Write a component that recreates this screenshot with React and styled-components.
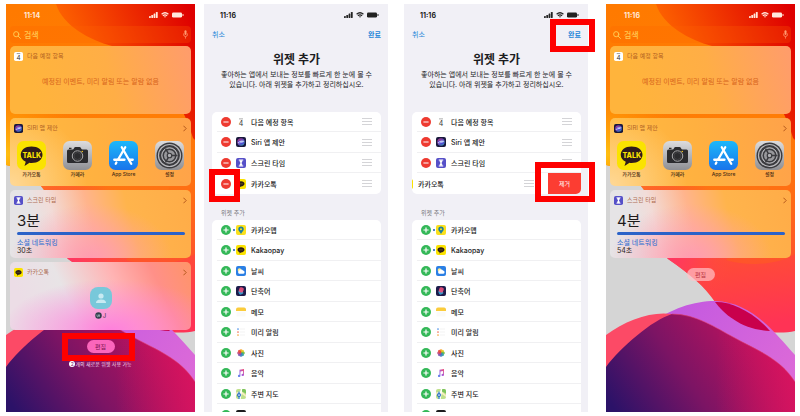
import styled, { createGlobalStyle, css } from "styled-components";

const GlobalStyle = createGlobalStyle`
  * {
    box-sizing: border-box;
  }

  body {
    margin: 0;
    background: #fff;
    font-family: Inter, "Noto Sans CJK KR", sans-serif;
    font-size: 7px;
    color: #222;
  }

  button {
    border: 0;
    padding: 0;
    background: none;
    font: inherit;
    color: inherit;
    cursor: pointer;
  }

  ul {
    list-style: none;
    margin: 0;
    padding: 0;
  }

  h1, h2, p {
    margin: 0;
    font: inherit;
  }

  svg {
    display: block;
    flex: none;
  }
`;

/* ---------- layout ---------- */

const Board = styled.main`
  display: grid;
  grid-template-columns: repeat(4, minmax(0, 1fr));
  height: 100vh;
  padding: 4px 0;
`;

const Phone = styled.section`
  position: relative;
  display: flex;
  flex-direction: column;
  min-height: 0;
  overflow: hidden;
  margin: 0 5px 0 6px;
  padding: 0 4px;
`;

const SheetPhone = styled.section`
  display: flex;
  flex-direction: column;
  min-height: 0;
  overflow: hidden;
  padding-right: 5px;
`;

const Sheet = styled.div`
  display: flex;
  flex-direction: column;
  min-height: 100%;
  margin: 0 7px 0 4px;
  padding: 0 7px 0 8px;
  background: #f1f0f6;
`;

const Highlight = styled.span`
  position: absolute;
  z-index: 2;
  border: 6px solid #fe0000;
  pointer-events: none;
  ${({ $area }) => $area}
`;

const pillArea = css`
  inset: -7px -20px -8px -25px;
`;

const doneArea = css`
  inset: -10px -14px -13px -18px;
`;

const minusArea = css`
  left: -3px;
  top: 57px;
  width: 31px;
  height: 33px;
`;

const removeArea = css`
  right: -14px;
  top: 50px;
  width: 60px;
  height: 40px;
`;

/* ---------- status bar ---------- */

const StatusRow = styled.div`
  position: relative;
  display: flex;
  align-items: center;
  justify-content: space-between;
  height: 22px;
  padding: 0 7px 0 ${({ $sheet }) => ($sheet ? "8px" : "14px")};
  color: ${({ $sheet }) => ($sheet ? "#222" : "#ffe9dc")};
  font-size: 7px;
  font-weight: 700;
  flex: none;
`;

const StatusIcons = styled.div`
  display: flex;
  align-items: center;
  gap: 3px;
  margin-right: ${({ $sheet }) => ($sheet ? "-5px" : "0")};
`;

const StatusBar = ({ time, sheet }) => (
  <StatusRow $sheet={sheet}>
    <span>{time}</span>
    <StatusIcons $sheet={sheet}>
      <svg width="9" height="6" viewBox="0 0 9 6" fill="currentColor">
        <rect x="0" y="4" width="1.8" height="2" rx=".4" />
        <rect x="2.3" y="3" width="1.8" height="3" rx=".4" />
        <rect x="4.6" y="1.6" width="1.8" height="4.4" rx=".4" />
        <rect x="6.9" y="0" width="1.8" height="6" rx=".4" />
      </svg>
      <svg width="8" height="6" viewBox="0 0 8 6" fill="none" stroke="currentColor">
        <path d="M.6 2.2Q4-.8 7.4 2.2" strokeWidth="1.3" />
        <path d="M1.9 3.7Q4 1.9 6.1 3.7" strokeWidth="1.2" />
        <path d="M3 4.6Q4 3.9 5 4.6L4 5.8Z" fill="currentColor" stroke="none" />
      </svg>
      <svg width="12" height="6" viewBox="0 0 12 6" fill="currentColor">
        <rect x="0" y=".4" width="10" height="5.2" rx="1.4" />
        <rect x="10.5" y="2" width="1" height="2" rx=".5" />
      </svg>
    </StatusIcons>
  </StatusRow>
);

/* ---------- wallpaper ---------- */

const WallpaperSvg = styled.svg`
  position: absolute;
  inset: 0;
  width: 100%;
  height: 100%;
`;

const Wallpaper = () => (
  <WallpaperSvg viewBox="0 0 189 408" preserveAspectRatio="none" aria-hidden="true">
    <defs>
      <linearGradient id="warm" gradientUnits="userSpaceOnUse" x1="60" y1="0" x2="100" y2="328">
        <stop offset="0" stopColor="#ff7a00" />
        <stop offset=".5" stopColor="#ff7e08" />
        <stop offset=".66" stopColor="#ff6a1c" />
        <stop offset=".8" stopColor="#ff4a38" />
        <stop offset="1" stopColor="#ff3355" />
      </linearGradient>
      <radialGradient id="pinkEdge" gradientUnits="userSpaceOnUse" cx="50" cy="240" r="80">
        <stop offset="0" stopColor="#ff2a7c" />
        <stop offset=".5" stopColor="#ff3a5c" stopOpacity=".7" />
        <stop offset="1" stopColor="#ff4a40" stopOpacity="0" />
      </radialGradient>
      <radialGradient id="yellowEdge" gradientUnits="userSpaceOnUse" cx="0" cy="150" r="80">
        <stop offset="0" stopColor="#ffc010" />
        <stop offset="1" stopColor="#ff8800" stopOpacity="0" />
      </radialGradient>
      <linearGradient id="hot" gradientUnits="userSpaceOnUse" x1="60" y1="60" x2="185" y2="10">
        <stop offset="0" stopColor="#ff6a00" />
        <stop offset=".45" stopColor="#f23a00" />
        <stop offset="1" stopColor="#de0000" />
      </linearGradient>
      <linearGradient id="violet" gradientUnits="userSpaceOnUse" x1="80" y1="300" x2="189" y2="370">
        <stop offset="0" stopColor="#c55ae0" />
        <stop offset="1" stopColor="#dc6ad8" />
      </linearGradient>
      <linearGradient id="deep" gradientUnits="userSpaceOnUse" x1="10" y1="408" x2="150" y2="310">
        <stop offset="0" stopColor="#2b1268" />
        <stop offset=".45" stopColor="#7c1464" />
        <stop offset="1" stopColor="#c8125c" />
      </linearGradient>
      <linearGradient id="rose" gradientUnits="userSpaceOnUse" x1="110" y1="0" x2="189" y2="0">
        <stop offset="0" stopColor="#d8105c" stopOpacity="0" />
        <stop offset="1" stopColor="#dc1460" stopOpacity=".8" />
      </linearGradient>
      <clipPath id="redShape">
        <path d="M0 161C20 165 32 178 38 186C44 215 50 243 62 255C85 271 98 282 109 298C122 315 138 325 154 327C168 329 180 329 189 327V0H0Z" />
      </clipPath>
    </defs>
    <rect width="189" height="408" fill="#d5d5d5" />
    <g clipPath="url(#redShape)">
      <rect width="189" height="330" fill="url(#warm)" />
      <rect width="189" height="330" fill="url(#yellowEdge)" />
      <rect width="189" height="330" fill="url(#pinkEdge)" />
      <path d="M189 120V250C170 262 140 262 120 256C150 225 165 180 189 120Z" fill="#ff6a10" opacity=".35" />
    </g>
    <path d="M50 0C57 22 84 36 106 42C150 58 176 96 187 134L189 136V0Z" fill="url(#hot)" />
    <path d="M40 322C66 304 88 297 109 297C146 298 168 328 189 351V384L100 350Z" fill="url(#violet)" />
    <path
      d="M109 298C122 297 146 306 164 327C136 326 118 310 109 298Z"
      fill="#c9004c"
    />
    <path d="M0 331C20 316 45 307 66 310C50 328 20 340 0 368Z" fill="#fc4a66" />
    <path d="M0 363C14 344 46 316 66 310C90 310 110 324 127 333C150 346 174 354 189 378V408H0Z" fill="url(#deep)" />
    <path d="M66 310C90 310 110 324 127 333C150 346 174 354 189 378V408H66Z" fill="url(#rose)" />
    <path d="M66 310C90 310 110 324 127 333C150 346 174 354 189 378" fill="none" stroke="#e0406c" strokeOpacity=".6" />
  </WallpaperSvg>
);

/* ---------- icons ---------- */

const Icon = ({ size = 10, children }) => (
  <svg width={size} height={size} viewBox="0 0 20 20" aria-hidden="true">
    {children}
  </svg>
);

const CalendarIcon = ({ size, dim }) => (
  <Icon size={size}>
    <rect width="20" height="20" rx="4" fill="#fff" />
    <rect x="6" y="3" width="8" height="1.6" fill={dim ? "#999" : "#777"} />
    <text x="10" y="17" textAnchor="middle" fontSize="14" fill="#333">4</text>
  </Icon>
);

const SiriIcon = ({ size }) => (
  <Icon size={size}>
    <defs>
      <linearGradient id="siri" x1="0" y1="0" x2="1" y2="1">
        <stop offset="0" stopColor="#ee3a8c" />
        <stop offset=".5" stopColor="#7a5ae8" />
        <stop offset="1" stopColor="#30c8e8" />
      </linearGradient>
    </defs>
    <rect width="20" height="20" rx="4" fill="#18183c" />
    <circle cx="10" cy="10" r="7.4" fill="url(#siri)" opacity=".75" />
    <path d="M3 12Q8 5 17 8Q13 14 3 12Z" fill="#d8e8ff" opacity=".8" />
    <path d="M4 8Q9 15 16 12" fill="none" stroke="#4a3ae8" strokeWidth="1.6" />
  </Icon>
);

const ScreenTimeIcon = ({ size }) => (
  <Icon size={size}>
    <rect width="20" height="20" rx="4" fill="#5650c8" />
    <path d="M5.5 4H14.5M5.5 16H14.5" stroke="#fff" strokeWidth="2" />
    <path d="M7 4.5H13C13 8 11.5 9 11 10C11.5 11 13 12 13 15.5H7C7 12 8.5 11 9 10C8.5 9 7 8 7 4.5Z" fill="#fff" />
  </Icon>
);

const TalkIcon = ({ size }) => (
  <Icon size={size}>
    <rect width="20" height="20" rx="4" fill="#fbe300" />
    <path d="M10 4.5C14.2 4.5 17 6.8 17 9.7S14.2 15 10 15L6.6 17L7.2 14.4C4.6 13.5 3 11.8 3 9.7C3 6.8 5.8 4.5 10 4.5Z" fill="#2c1c1a" />
    <path d="M6 9.7H14" stroke="#8a780e" strokeWidth="1.4" strokeDasharray="1.6 .6" />
  </Icon>
);

const MapPinIcon = () => (
  <Icon>
    <rect width="20" height="20" rx="4" fill="#fae01c" />
    <path d="M10 3A5.5 5.5 0 0 1 15.5 8.5C15.5 12 11.5 14 10 18C8.5 14 4.5 12 4.5 8.5A5.5 5.5 0 0 1 10 3Z" fill="#1d7fa0" />
    <circle cx="10" cy="8.5" r="2" fill="#fae01c" />
  </Icon>
);

const WeatherIcon = () => (
  <Icon>
    <rect width="20" height="20" rx="4" fill="#2b7fe4" />
    <circle cx="7" cy="8" r="3.6" fill="#ffe98a" />
    <path d="M6.5 15.5A3.3 3.3 0 0 1 6.6 9.2A4.2 4.2 0 0 1 14 8.8A3.4 3.4 0 0 1 14.5 15.5Z" fill="#fff" />
  </Icon>
);

const ShortcutsIcon = () => (
  <Icon>
    <rect width="20" height="20" rx="4" fill="#1c1b4a" />
    <rect x="5" y="8" width="9" height="9" rx="3" transform="rotate(-20 9 12)" fill="#36a8d8" opacity=".9" />
    <rect x="6" y="3" width="9" height="10" rx="3" transform="rotate(20 11 8)" fill="#f0507c" opacity=".9" />
  </Icon>
);

const NotesIcon = () => (
  <Icon>
    <rect width="20" height="20" rx="4" fill="#fdfdfb" />
    <path d="M0 8V5A4 4 0 0 1 4 1H16A4 4 0 0 1 20 4V8Z" fill="#fbcc3c" />
    <path d="M2 12H18M2 16H18" stroke="#f2f2f2" />
  </Icon>
);

const RemindersIcon = () => (
  <Icon>
    <circle cx="4" cy="4" r="1.7" fill="#4a90e8" />
    <circle cx="4" cy="10" r="1.7" fill="#f0705c" />
    <circle cx="4" cy="16" r="1.7" fill="#f8a53c" />
    <path d="M8 4H18M8 10H18M8 16H18" stroke="#e4e4e4" />
  </Icon>
);

const petals = ["#f8a020", "#e8d020", "#70b840", "#30a898", "#4078c8", "#7858b0", "#c04880", "#e84838"];

const PhotosIcon = () => (
  <Icon>
    {petals.map((fill, i) => (
      <rect
        key={fill}
        x="7.4"
        y="2.4"
        width="5.2"
        height="7.6"
        rx="2.4"
        fill={fill}
        opacity=".9"
        transform={`rotate(${i * 45} 10 10)`}
      />
    ))}
  </Icon>
);

const MusicIcon = () => (
  <Icon>
    <defs>
      <linearGradient id="note" x1="0" y1="1" x2="1" y2="0">
        <stop offset="0" stopColor="#4a8cf0" />
        <stop offset=".5" stopColor="#a85ad8" />
        <stop offset="1" stopColor="#f8506c" />
      </linearGradient>
    </defs>
    <path
      d="M7 3.5L16 2V14A2.5 2.2 0 1 1 14.2 11.9V6L8.8 7V15.8A2.5 2.2 0 1 1 7 13.6Z"
      fill="url(#note)"
    />
  </Icon>
);

const MapsIcon = () => (
  <Icon>
    <rect width="20" height="20" rx="4" fill="#bfe08c" />
    <path d="M12 0H16A4 4 0 0 1 20 4V9L12 5Z" fill="#7cc45c" />
    <path d="M0 12L9 8L20 16V12L10 4L0 7Z" fill="#f6edc0" />
    <path d="M11 0L8 20" stroke="#fff" strokeWidth="3" />
    <path d="M6 5V20" stroke="#3a8ae0" strokeWidth="2.6" />
    <circle cx="6" cy="12" r="4" fill="#2a6cc8" />
    <path d="M6 9L8 14L6 13L4 14Z" fill="#fff" />
  </Icon>
);

const StocksIcon = () => (
  <Icon>
    <rect width="20" height="20" rx="4" fill="#1c1c1e" />
    <path d="M3 13L8 9L12 12L17 6" fill="none" stroke="#fff" />
  </Icon>
);

const AppTile = ({ children }) => (
  <svg width="29" height="29" viewBox="0 0 58 58" aria-hidden="true">
    {children}
  </svg>
);

const TalkTile = () => (
  <AppTile>
    <rect width="58" height="58" rx="13" fill="#fae300" />
    <path d="M29 11C42 11 51 18 51 27.5S42 44 29 44Q27 44 25 43.6L15 50L17.5 41.5C11 38.5 7.5 33.5 7.5 27.5C7.5 18 16 11 29 11Z" fill="#2e1c1c" />
    <text x="29.5" y="33" textAnchor="middle" fontSize="14" fontWeight="800" fill="#fae300">TALK</text>
  </AppTile>
);

const CameraTile = () => (
  <AppTile>
    <defs>
      <linearGradient id="silver" x1="0" y1="0" x2="0" y2="1">
        <stop offset="0" stopColor="#dcdcde" />
        <stop offset="1" stopColor="#8e8f94" />
      </linearGradient>
    </defs>
    <rect width="58" height="58" rx="13" fill="url(#silver)" />
    <path d="M12 13.5H17V16H12ZM8 20Q8 17 11 17H19Q21 17 22 14.5Q23 12 25 12H33Q35 12 36 14.5Q37 17 39 17H47Q50 17 50 20V41Q50 44 47 44H11Q8 44 8 41Z" fill="#2b2b2e" />
    <circle cx="29" cy="30" r="10.5" fill="none" stroke="#a8a8aa" strokeWidth="2" />
    <circle cx="29" cy="30" r="7" fill="none" stroke="#48484c" strokeWidth="1.5" />
    <circle cx="38.5" cy="21" r="1.6" fill="#f0c020" />
  </AppTile>
);

const StoreTile = () => (
  <AppTile>
    <defs>
      <linearGradient id="store" x1="0" y1="0" x2="0" y2="1">
        <stop offset="0" stopColor="#1cb8fa" />
        <stop offset="1" stopColor="#1a74ea" />
      </linearGradient>
    </defs>
    <rect width="58" height="58" rx="13" fill="url(#store)" />
    <g fill="none" stroke="#fff" strokeWidth="4.6" strokeLinecap="round">
      <path d="M32.5 12.5L18.5 36.5M14.8 43L13.5 45.5" />
      <path d="M25.5 12.5L44.5 45.5" />
      <path d="M10.5 37.5H31M40 37.5H47.5" />
    </g>
  </AppTile>
);

const SettingsTile = () => (
  <AppTile>
    <rect width="58" height="58" rx="13" fill="url(#silver)" />
    <circle cx="29" cy="29" r="26" fill="#3b3b3f" />
    <circle cx="29" cy="29" r="22" fill="none" stroke="#b6b6ba" strokeWidth="2.4" />
    <circle cx="29" cy="29" r="15.5" fill="#98989c" stroke="#c4c4c8" strokeWidth="2" />
    <circle cx="29" cy="29" r="12.5" fill="none" stroke="#3b3b3f" strokeWidth="3" />
    <path d="M29 29L45 29M29 29L21 15.1M29 29L21 42.9" stroke="#3b3b3f" strokeWidth="3" />
    <circle cx="29" cy="29" r="4.5" fill="#b0b0b4" stroke="#3b3b3f" strokeWidth="2.4" />
  </AppTile>
);

/* ---------- widget screen ---------- */

const SearchBar = styled.label`
  position: relative;
  display: flex;
  align-items: center;
  gap: 3px;
  height: 17px;
  margin-bottom: 3px;
  padding: 0 3px;
  border-radius: 4px;
  background: rgba(255, 100, 0, 0.25);
  color: #ffc852;
  flex: none;
`;

const SearchInput = styled.input`
  flex: 1;
  min-width: 0;
  padding: 0;
  border: 0;
  outline: 0;
  background: none;
  font: inherit;
  font-size: 8px;
  font-weight: 500;
  color: inherit;

  &::placeholder {
    color: inherit;
    opacity: 1;
  }
`;

const WidgetStack = styled.div`
  position: relative;
  display: grid;
  grid-auto-rows: 68px;
  gap: 4px;
  flex: none;
`;

const tints = {
  peach: "linear-gradient(75deg, #ffb43c 15%, #ffae46 55%, #ff9c6c)",
  amber:
    "radial-gradient(circle at 0 100%, #ffd896, transparent 40%), linear-gradient(80deg, #ffbc40, #ffb040 50%, #ffa24a)",
  mixed:
    "radial-gradient(ellipse 45% 80% at 45% 100%, #ff9cb0, rgba(255, 156, 160, 0)), linear-gradient(75deg, #e6e4e6 16%, #f2dcd8 27%, #ffb48c 46%, #ffb44c 66%, #ffac48)",
  pink:
    "radial-gradient(ellipse 60% 75% at 56% 100%, #ff80dc, rgba(255, 128, 200, 0)), linear-gradient(65deg, #ecdde6 12%, #e8e4e6 34%, #ffb4b4 60%, #ff9088 80%, #ff9468)",
};

const WidgetCard = styled.article`
  padding: 5px 4px;
  border-radius: 5px;
  background: ${({ $tint }) => tints[$tint]};
  overflow: hidden;
`;

const WidgetHead = styled.header`
  display: flex;
  align-items: center;
  gap: 4px;
  height: 10px;
  font-size: 6px;
  line-height: 10px;
  color: rgba(150, 66, 20, 0.75);

  h2 {
    flex: 1;
  }
`;

const EmptyText = styled.p`
  margin-top: 14px;
  text-align: center;
  line-height: 14px;
  color: #d8641c;
`;

const AppRow = styled.ul`
  display: flex;
  justify-content: space-between;
  margin: 8px 3px 0;
`;

const AppItem = styled.li`
  display: flex;
  flex-direction: column;
  align-items: center;
  width: 29px;
  font-size: 5px;
  line-height: 9px;
  font-weight: 500;
  color: #4a2c14;
  white-space: nowrap;
`;

const Usage = styled.div`
  margin: 6px 2px 0 3px;
  line-height: 8px;
  color: #2b2320;
`;

const UsageTotal = styled.p`
  font-size: 15px;
  line-height: 20px;
  color: #1e1a1a;
`;

const UsageBar = styled.div`
  height: 3px;
  margin: 1px 0 4px;
  border-radius: 2px;
  background: #2b62c8;
`;

const UsageLabel = styled.p`
  color: #2a6ad0;
`;

const Friend = styled.div`
  display: flex;
  flex-direction: column;
  align-items: center;
  gap: 3px;
  margin-top: 10px;
`;

const FriendName = styled.span`
  display: flex;
  align-items: center;
  gap: 1px;
  font-size: 6px;
  line-height: 7px;
  color: #3a2c44;
`;

const EditArea = styled.div`
  position: relative;
  display: flex;
  flex-direction: column;
  align-items: center;
  gap: 7px;
  margin-top: 10px;
`;

const PillWrap = styled.div`
  position: relative;
`;

const EditPill = styled.button`
  display: block;
  width: 28px;
  height: 13px;
  border-radius: 7px;
  background: ${({ $bright }) => ($bright ? "#fb66bc" : "rgba(255, 195, 200, 0.7)")};
  color: ${({ $bright }) => ($bright ? "#7c1450" : "#b83440")};
  font-size: 6px;
`;

const Hint = styled.p`
  display: flex;
  align-items: center;
  font-size: 5px;
  line-height: 8px;
  color: #f3d8ea;
  white-space: nowrap;
`;

const HintCount = styled.span`
  width: 6px;
  border-radius: 3px;
  background: #fff;
  color: #7c1464;
  line-height: 6px;
  text-align: center;
`;

const Chevron = () => (
  <svg width="4" height="7" viewBox="0 0 4 7" fill="none" stroke="#b4581c" strokeLinecap="round">
    <path d="M.7 1L3.2 3.5L.7 6" />
  </svg>
);

const Widget = ({ icon, title, tint, chevron, children }) => (
  <WidgetCard $tint={tint}>
    <WidgetHead>
      {icon}
      <h2>{title}</h2>
      {chevron && <Chevron />}
    </WidgetHead>
    {children}
  </WidgetCard>
);

const suggestedApps = [
  { name: "카카오톡", Tile: TalkTile },
  { name: "카메라", Tile: CameraTile },
  { name: "App Store", Tile: StoreTile },
  { name: "설정", Tile: SettingsTile },
];

const WidgetScreen = ({ time, total, detail, withTalk }) => (
  <Phone>
    <Wallpaper />
    <StatusBar time={time} />
    <SearchBar>
      <svg width="8" height="8" viewBox="0 0 8 8" fill="none" stroke="currentColor" strokeLinecap="round">
        <circle cx="3.2" cy="3.2" r="2.6" />
        <path d="M5.2 5.2L7.5 7.5" />
      </svg>
      <SearchInput placeholder="검색" aria-label="검색" />
      <svg width="5" height="9" viewBox="0 0 5 9" fill="none" stroke="#ff9a70">
        <rect x="1.5" y=".3" width="2" height="4.7" rx="1" fill="#ff9a70" stroke="none" />
        <path d="M.5 3.5V4.5A2 2 0 0 0 4.5 4.5V3.5M2.5 6.5V8.6" strokeWidth=".7" />
      </svg>
    </SearchBar>

    <WidgetStack>
      <Widget icon={<CalendarIcon size={9} />} title="다음 예정 항목" tint="peach">
        <EmptyText>예정된 이벤트, 미리 알림 또는 알람 없음</EmptyText>
      </Widget>
      <Widget icon={<SiriIcon size={9} />} title="SIRI 앱 제안" tint="amber" chevron>
        <AppRow>
          {suggestedApps.map(({ name, Tile }) => (
            <AppItem key={name}>
              <Tile />
              {name}
            </AppItem>
          ))}
        </AppRow>
      </Widget>
      <Widget icon={<ScreenTimeIcon size={9} />} title="스크린 타임" tint="mixed" chevron>
        <Usage>
          <UsageTotal>{total}</UsageTotal>
          <UsageBar />
          <UsageLabel>소셜 네트워킹</UsageLabel>
          <p>{detail}</p>
        </Usage>
      </Widget>
      {withTalk && (
        <Widget icon={<TalkIcon size={9} />} title="카카오톡" tint="pink" chevron>
          <Friend>
            <svg width="22" height="22" viewBox="0 0 22 22" aria-hidden="true">
              <rect width="22" height="22" rx="8" fill="#78c8da" />
              <circle cx="11" cy="9" r="2.6" fill="#c8eaf2" />
              <path d="M6 16C6 13 8.5 12.4 11 12.4S16 13 16 16Z" fill="#c8eaf2" />
            </svg>
            <FriendName>
              <svg width="7" height="7" viewBox="0 0 14 14" aria-hidden="true">
                <circle cx="7" cy="7" r="6.5" fill="#30404c" />
                <path d="M4 5V8A1.5 1.5 0 0 0 7 8V5M9 5V9.5" fill="none" stroke="#b8c8d0" strokeWidth="1.4" />
              </svg>
              J
            </FriendName>
          </Friend>
        </Widget>
      )}
    </WidgetStack>

    <EditArea>
      <PillWrap>
        <EditPill $bright={withTalk}>편집</EditPill>
        {withTalk && <Highlight $area={pillArea} />}
      </PillWrap>
      {withTalk && (
        <Hint>
          <HintCount>2</HintCount>개의 새로운 위젯 사용 가능
        </Hint>
      )}
    </EditArea>
  </Phone>
);

/* ---------- add widgets sheet ---------- */

const NavRow = styled.nav`
  display: flex;
  align-items: center;
  justify-content: space-between;
  height: 16px;
  color: #1f86d8;
  flex: none;
`;

const DoneButton = styled.button`
  position: relative;
  font-weight: 700;
`;

const SheetTitle = styled.h1`
  margin-top: 9px;
  text-align: center;
  font-size: 12px;
  font-weight: 700;
  line-height: 18px;
  color: #1c1c1e;
`;

const SheetText = styled.p`
  text-align: center;
  line-height: 10px;
  margin: 1px 0 22px;
  color: #1c1c1e;
`;

const SectionLabel = styled.h2`
  margin: 14px 0 2px 9px;
  font-size: 6px;
  line-height: 10px;
  color: #77777c;
`;

const ListWrap = styled.div`
  position: relative;
  flex: none;
`;

const List = styled.ul`
  display: grid;
  grid-auto-rows: 20px 21px;
  border-radius: 5px;
  background: #fff;
  overflow: hidden;
`;

const Row = styled.li`
  display: flex;
  align-items: center;
  min-width: 0;
  margin-left: 5px;
  padding: 0 9px 0 4px;
  border-bottom: 1px solid #f0f0f2;

  &:last-child {
    border-bottom: 0;
  }

  ${({ $swiped }) =>
    $swiped &&
    css`
      margin-left: -28px;
      padding-right: 0;
    `}
`;

const RowLabel = styled.span`
  flex: 1;
  margin-left: 5px;
  font-weight: 500;
  color: #222;
  white-space: nowrap;
`;

const DotSlot = styled.span`
  display: flex;
  justify-content: center;
  width: 5px;

  &::before {
    content: "";
    width: 2px;
    height: 2px;
    border-radius: 1px;
    background: ${({ $on }) => ($on ? "#1c5cb0" : "transparent")};
  }
`;

const RemoveButton = styled.button`
  align-self: stretch;
  width: 33px;
  margin-left: 14px;
  background: #fc3d32;
  color: #fff;
  font-size: 6px;
`;

const ToggleButton = ({ kind, name }) => (
  <button type="button" aria-label={`${name} ${kind === "minus" ? "제거" : "추가"}`}>
    <svg width="10" height="10" viewBox="0 0 10 10" stroke="#fff" strokeWidth="1.2">
      <circle cx="5" cy="5" r="5" fill={kind === "minus" ? "#ee3a30" : "#34b858"} stroke="none" />
      <path d={kind === "minus" ? "M2.4 5H7.6" : "M2.4 5H7.6M5 2.4V7.6"} />
    </svg>
  </button>
);

const Handle = () => (
  <svg width="10" height="7" viewBox="0 0 10 7" stroke="#d4d4d7" aria-hidden="true">
    <path d="M0 .5H10M0 3.5H10M0 6.5H10" />
  </svg>
);

const activeWidgets = [
  { name: "다음 예정 항목", icon: <CalendarIcon dim /> },
  { name: "Siri 앱 제안", icon: <SiriIcon /> },
  { name: "스크린 타임", icon: <ScreenTimeIcon /> },
  { name: "카카오톡", icon: <TalkIcon /> },
];

const moreWidgets = [
  { name: "카카오맵", icon: <MapPinIcon />, isNew: true },
  { name: "Kakaopay", icon: <TalkIcon />, isNew: true },
  { name: "날씨", icon: <WeatherIcon /> },
  { name: "단축어", icon: <ShortcutsIcon /> },
  { name: "메모", icon: <NotesIcon /> },
  { name: "미리 알림", icon: <RemindersIcon /> },
  { name: "사진", icon: <PhotosIcon /> },
  { name: "음악", icon: <MusicIcon /> },
  { name: "주변 지도", icon: <MapsIcon /> },
  { name: "주식", icon: <StocksIcon /> },
];

const AddSheet = ({ removing }) => (
  <SheetPhone>
    <Sheet>
      <StatusBar time="11:16" sheet />
      <NavRow>
        <button type="button">취소</button>
        <DoneButton type="button">
          완료
          {removing && <Highlight $area={doneArea} />}
        </DoneButton>
      </NavRow>
      <SheetTitle>위젯 추가</SheetTitle>
      <SheetText>
        좋아하는 앱에서 보내는 정보를 빠르게 한 눈에 볼 수
        <br />
        있습니다. 아래 위젯을 추가하고 정리하십시오.
      </SheetText>

      <ListWrap>
        <List>
          {activeWidgets.map(({ name, icon }, i) => {
            const swiped = removing && i === activeWidgets.length - 1;
            return (
              <Row key={name} $swiped={swiped}>
                <ToggleButton kind="minus" name={name} />
                <DotSlot />
                {icon}
                <RowLabel>{name}</RowLabel>
                <Handle />
                {swiped && <RemoveButton type="button">제거</RemoveButton>}
              </Row>
            );
          })}
        </List>
        <Highlight $area={removing ? removeArea : minusArea} />
      </ListWrap>

      <SectionLabel>위젯 추가</SectionLabel>
      <ListWrap>
        <List>
          {moreWidgets.map(({ name, icon, isNew }) => (
            <Row key={name}>
              <ToggleButton kind="plus" name={name} />
              <DotSlot $on={isNew} />
              {icon}
              <RowLabel>{name}</RowLabel>
            </Row>
          ))}
        </List>
      </ListWrap>
    </Sheet>
  </SheetPhone>
);

const App = () => {
  return (
    <>
      <GlobalStyle />
      <Board>
        <WidgetScreen time="11:14" total="3분" detail="30초" withTalk />
        <AddSheet />
        <AddSheet removing />
        <WidgetScreen time="11:16" total="4분" detail="54초" />
      </Board>
    </>
  );
};

export default App;
